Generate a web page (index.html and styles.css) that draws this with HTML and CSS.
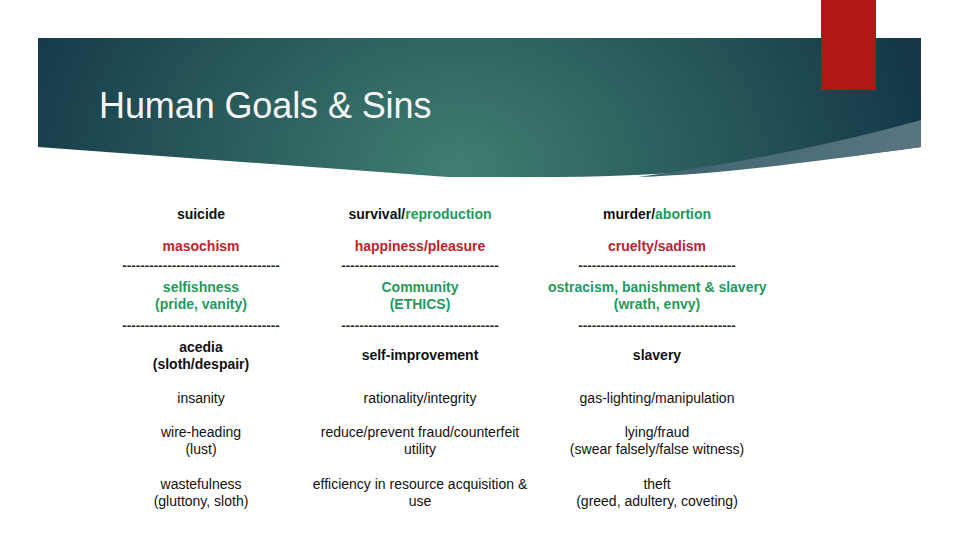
FILE: index.html
```html
<!DOCTYPE html>
<html>
<head>
<meta charset="utf-8">
<link rel="stylesheet" href="styles.css">
</head>
<body>
<div class="slide">
  <div class="accent"></div>
  <header class="banner">
    <svg class="banner-bg" viewBox="0 0 883 140" preserveAspectRatio="none">
      <defs>
        <radialGradient id="g" gradientUnits="userSpaceOnUse" cx="420" cy="130" r="470" gradientTransform="translate(420 130) scale(1 0.75) translate(-420 -130)">
          <stop offset="0" stop-color="#3f7e71"/>
          <stop offset="0.55" stop-color="#28585a"/>
          <stop offset="1" stop-color="#143848"/>
        </radialGradient>
        <linearGradient id="lb" x1="0" y1="0" x2="1" y2="0">
          <stop offset="0" stop-color="#3f6270"/>
          <stop offset="1" stop-color="#587681"/>
        </linearGradient>
      </defs>
      <path d="M0 0 H883 V109 C760 126 640 138 520 139 L410 139 L0 109 Z" fill="url(#g)"/>
      <path d="M600 139 C700 126 800 105 883 82 V109 C760 126 680 136 600 139 Z" fill="url(#lb)"/>
    </svg>
    <h1 class="title">Human Goals &amp; Sins</h1>
  </header>
  <div class="table">
    <div class="row r1">
      <div class="cell b">suicide</div>
      <div class="cell b">survival/<span class="green">reproduction</span></div>
      <div class="cell b">murder/<span class="green">abortion</span></div>
    </div>
    <div class="row r2">
      <div class="cell b red">masochism</div>
      <div class="cell b red">happiness/pleasure</div>
      <div class="cell b red">cruelty/sadism</div>
    </div>
    <div class="row r3">
      <div class="cell dash">-----------------------------------</div>
      <div class="cell dash">-----------------------------------</div>
      <div class="cell dash">-----------------------------------</div>
    </div>
    <div class="row r4">
      <div class="cell b green">selfishness<br>(pride, vanity)</div>
      <div class="cell b green">Community<br>(ETHICS)</div>
      <div class="cell b green">ostracism, banishment &amp; slavery<br>(wrath, envy)</div>
    </div>
    <div class="row r5">
      <div class="cell dash">-----------------------------------</div>
      <div class="cell dash">-----------------------------------</div>
      <div class="cell dash">-----------------------------------</div>
    </div>
    <div class="row r6">
      <div class="cell b">acedia<br>(sloth/despair)</div>
      <div class="cell b">self-improvement</div>
      <div class="cell b">slavery</div>
    </div>
    <div class="row r7">
      <div class="cell">insanity</div>
      <div class="cell">rationality/integrity</div>
      <div class="cell">gas-lighting/manipulation</div>
    </div>
    <div class="row r8">
      <div class="cell">wire-heading<br>(lust)</div>
      <div class="cell">reduce/prevent fraud/counterfeit<br>utility</div>
      <div class="cell">lying/fraud<br>(swear falsely/false witness)</div>
    </div>
    <div class="row r9">
      <div class="cell">wastefulness<br>(gluttony, sloth)</div>
      <div class="cell">efficiency in resource acquisition &amp;<br>use</div>
      <div class="cell">theft<br>(greed, adultery, coveting)</div>
    </div>
  </div>
</div>
</body>
</html>
```

FILE: styles.css
```css
html, body {
  margin: 0;
  padding: 0;
  background: #ffffff;
}
.slide {
  position: relative;
  width: 960px;
  height: 540px;
  overflow: hidden;
  font-family: "Liberation Sans", Arial, sans-serif;
  color: #111111;
}
.accent {
  position: absolute;
  left: 821px;
  top: 0;
  width: 55px;
  height: 90px;
  background: #b01817;
  z-index: 2;
}
.banner {
  position: relative;
  margin: 38px 39px 0 38px;
  height: 140px;
  box-sizing: border-box;
  padding: 50px 0 0 61px;
}
.banner-bg {
  position: absolute;
  left: 0;
  top: 0;
  width: 100%;
  height: 100%;
  display: block;
}
.title {
  position: relative;
  margin: 0;
  font-weight: normal;
  font-size: 36px;
  line-height: 36px;
  color: #f4f6f5;
  letter-spacing: -0.1px;
}
.table {
  margin: 22px 0 0 110px;
}
.row {
  display: grid;
  grid-template-columns: 182px 256px 218px;
  align-items: center;
}
.cell {
  text-align: center;
  font-size: 14px;
  line-height: 17px;
  white-space: nowrap;
}
.b {
  font-weight: bold;
  font-size: 14px;
}
.green { color: #1f9a5b; }
.red { color: #c1212c; }
.dash {
  font-weight: bold;
  font-size: 13.5px;
  line-height: 4px;
  color: #222222;
}
.r1 { height: 28px; }
.r2 { height: 36px; }
.r3 { height: 4px; }
.r4 { height: 56px; }
.r5 { height: 4px; }
.r6 { height: 55px; }
.r7 { height: 30px; }
.r8 { height: 55px; }
.r9 { height: 49px; }
```
